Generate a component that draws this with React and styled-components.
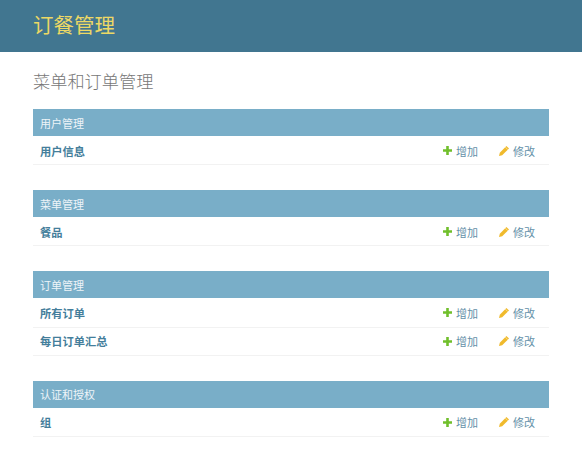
import React from "react";
import styled, { createGlobalStyle } from "styled-components";

const Global = createGlobalStyle`
  html, body { margin: 0; padding: 0; background: #fff; }
  body {
    font-family: "Liberation Sans", "Noto Sans CJK SC", sans-serif;
    color: #333;
  }
`;

const Header = styled.header`
  height: 52px;
  background: #417690;
  display: flex;
  align-items: center;
  padding: 0 33px;
`;

const Brand = styled.h1`
  margin: 0;
  font-size: 20.5px;
  font-weight: 400;
  line-height: 26px;
  color: #ecd865;
`;

const Content = styled.main`
  padding: 19px 33px 0;
`;

const PageTitle = styled.h2`
  margin: 0 0 16px;
  font-size: 17.2px;
  font-weight: 300;
  line-height: 22px;
  color: #777;
`;

const Module = styled.section`
  margin-bottom: 25px;
`;

const Caption = styled.div`
  height: 27px;
  margin-bottom: 1px;
  padding: 0 7px;
  display: flex;
  align-items: center;
  background: #79aec8;
  color: #eef4f8;
  font-size: 11px;
`;

const Row = styled.div`
  height: 27.2px;
  padding: 0 14px 0 7px;
  display: flex;
  align-items: center;
  border-bottom: 1px solid #f2f2f2;
`;

const ModelName = styled.a`
  flex: 1;
  font-size: 11.25px;
  font-weight: 700;
  color: #447e9b;
`;

const Action = styled.a`
  display: flex;
  align-items: center;
  gap: 4px;
  width: ${props => props.$width}px;
  font-size: 11px;
  color: #6390a8;
`;

const PlusIcon = () => (
  <svg width="9" height="9" viewBox="0 0 9 9">
    <path d="M3.2 0h2.6v3.2H9v2.6H5.8V9H3.2V5.8H0V3.2h3.2z" fill="#70bf2b" />
  </svg>
);

const PencilIcon = () => (
  <svg width="10" height="10" viewBox="0 0 10 10">
    <path d="M7.4 0 10 2.6 3.2 9.2 0 10l.8-3.2z" fill="#f0ba2c" />
    <path d="M6.3 1.1 8.9 3.7" stroke="#fff" strokeWidth=".5" />
  </svg>
);

const modules = [
  { title: "用户管理", rows: ["用户信息"] },
  { title: "菜单管理", rows: ["餐品"] },
  { title: "订单管理", rows: ["所有订单", "每日订单汇总"] },
  { title: "认证和授权", rows: ["组"] },
];

export default function App() {
  return (
    <>
      <Global />
      <Header>
        <Brand>订餐管理</Brand>
      </Header>
      <Content>
        <PageTitle>菜单和订单管理</PageTitle>
        {modules.map(mod => (
          <Module key={mod.title}>
            <Caption>{mod.title}</Caption>
            {mod.rows.map(name => (
              <Row key={name}>
                <ModelName>{name}</ModelName>
                <Action $width={56}>
                  <PlusIcon />
                  增加
                </Action>
                <Action $width={36}>
                  <PencilIcon />
                  修改
                </Action>
              </Row>
            ))}
          </Module>
        ))}
      </Content>
    </>
  );
}
